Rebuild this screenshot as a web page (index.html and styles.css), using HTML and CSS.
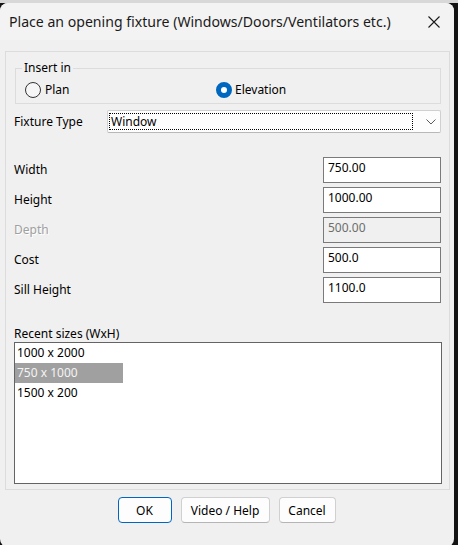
FILE: index.html
```html
<!DOCTYPE html>
<html>
<head>
<meta charset="utf-8">
<link rel="stylesheet" href="styles.css">
</head>
<body>
<div class="dialog">
  <div class="titlebar">
    <span class="title">Place an opening fixture (Windows/Doors/Ventilators etc.)</span>
    <svg class="close" width="12" height="12" viewBox="0 0 12 12"><path d="M0.5 0.5L11.5 11.5M11.5 0.5L0.5 11.5" stroke="#1a1a1a" stroke-width="1.1" fill="none"/></svg>
  </div>
  <div class="content">
    <div class="frame">
      <fieldset class="group">
        <legend>Insert in</legend>
        <div class="radios">
          <label class="radio"><span class="dot"></span>Plan</label>
          <label class="radio sel"><span class="dot on"></span>Elevation</label>
        </div>
      </fieldset>
      <div class="selrow">
        <span class="lbl">Fixture Type</span>
        <div class="select">
          <span class="focus">Window</span>
          <svg class="chev" width="10" height="6" viewBox="0 0 10 6"><path d="M0.5 0.5L5 5L9.5 0.5" stroke="#555" stroke-width="1" fill="none"/></svg>
        </div>
      </div>
      <div class="fields">
        <div class="row"><span class="lbl">Width</span><div class="input">750.00</div></div>
        <div class="row"><span class="lbl">Height</span><div class="input">1000.00</div></div>
        <div class="row"><span class="lbl dis">Depth</span><div class="input disabled">500.00</div></div>
        <div class="row"><span class="lbl">Cost</span><div class="input">500.0</div></div>
        <div class="row"><span class="lbl">Sill Height</span><div class="input">1100.0</div></div>
      </div>
      <div class="recent">Recent sizes (WxH)</div>
      <div class="listbox">
        <div class="item">1000 x 2000</div>
        <div class="item hl">750 x 1000</div>
        <div class="item">1500 x 200</div>
      </div>
    </div>
    <div class="buttons">
      <button class="btn def">OK</button>
      <button class="btn">Video / Help</button>
      <button class="btn">Cancel</button>
    </div>
  </div>
</div>
</body>
</html>
```

FILE: styles.css
```css
html, body {
  margin: 0;
  padding: 0;
}
body {
  width: 458px;
  height: 545px;
  overflow: hidden;
  background: linear-gradient(#d8d8d8 0, #d8d8d8 3px, #141414 3px);
  font-family: "Segoe UI", "Noto Sans", "Liberation Sans", sans-serif;
  font-size: 12px;
  color: #000;
}
.dialog {
  margin-top: 3px;
  width: 454px;
  height: 544px;
  background: #f0f0f0;
  border-radius: 8px;
  overflow: hidden;
  display: flex;
  flex-direction: column;
}
.titlebar {
  height: 37px;
  flex: none;
  background: #f3f3f3;
  display: flex;
  align-items: center;
  padding-left: 9px;
  padding-right: 14px;
  justify-content: space-between;
}
.title {
  font-size: 14.1px;
  color: #1a1a1a;
  line-height: 20px;
  margin-top: 0;
}
.close {
  display: block;
  margin-top: 1px;
}
.content {
  padding-top: 11px;
}
.frame {
  margin-left: 5px;
  width: 445px;
  height: 439px;
  box-sizing: border-box;
  border: 1px solid #dcdcdc;
  padding-left: 8px;
}
.group {
  margin: 8px 0 0 1px;
  width: 426px;
  box-sizing: border-box;
  border: 1px solid #dcdcdc;
  padding: 6px 8px 5px 9px;
}
.group legend {
  padding: 0 2px;
  margin-left: -3px;
  line-height: 16px;
}
.radios {
  display: flex;
  height: 16px;
}
.radio {
  display: flex;
  align-items: center;
  line-height: 16px;
}
.radio:first-child {
  width: 191px;
}
.dot {
  width: 14px;
  height: 14px;
  border: 1px solid #333;
  border-radius: 50%;
  background: #f6f6f6;
  margin-right: 4px;
  box-sizing: content-box;
  flex: none;
}
.dot.on {
  background: #ffffff;
  box-sizing: border-box;
  width: 16px;
  height: 16px;
  border: 5px solid #0067c0;
  margin-right: 3px;
}
.selrow {
  display: flex;
  align-items: center;
  margin-top: 6px;
  height: 23px;
}
.selrow .lbl {
  width: 93px;
}
.select {
  width: 334px;
  height: 23px;
  box-sizing: border-box;
  background: #fdfdfd;
  border: 1px solid #d0d0d0;
  border-bottom-color: #b8b8b8;
  border-radius: 2px;
  display: flex;
  align-items: center;
  padding: 0 4px 0 1px;
}
.focus {
  width: 306px;
  height: 17px;
  box-sizing: border-box;
  border: 1px dotted #000;
  line-height: 15px;
  padding-left: 1px;
}
.chev {
  margin-left: 13px;
}
.fields {
  margin-top: 24px;
  width: 427px;
  display: flex;
  flex-direction: column;
  gap: 4px;
}
.row {
  display: flex;
  justify-content: space-between;
  align-items: center;
  height: 26px;
}
.lbl {
  line-height: 16px;
}
.lbl.dis {
  color: #a0a0a0;
  text-shadow: 1px 1px 0 #ffffff;
}
.input {
  width: 118px;
  height: 26px;
  box-sizing: border-box;
  border: 1px solid #7a7a7a;
  background: #fff;
  padding: 2px 0 0 4px;
  line-height: 16px;
}
.input.disabled {
  background: #f0f0f0;
  color: #6d6d6d;
}
.recent {
  margin-top: 22px;
  line-height: 17px;
}
.listbox {
  width: 428px;
  height: 142px;
  box-sizing: border-box;
  border: 1px solid #646464;
  background: #fff;
}
.item {
  width: 108px;
  height: 20px;
  line-height: 20px;
  padding-left: 2px;
  box-sizing: border-box;
}
.item.hl {
  background: #a0a0a0;
  color: #f4f4f4;
}
.buttons {
  display: flex;
  justify-content: center;
  gap: 9px;
  margin-top: 7px;
  padding-right: 1px;
}
.btn {
  font-family: inherit;
  font-size: 12px;
  height: 26px;
  background: #fdfdfd;
  border: 1px solid #d0d0d0;
  border-bottom-color: #b5b5b5;
  border-radius: 4px;
  padding: 0;
  color: #000;
}
.btn:nth-child(1) { width: 54px; }
.btn:nth-child(2) { width: 89px; }
.btn:nth-child(3) { width: 57px; }
.btn.def {
  border: 1px solid #0067c0;
}
```
